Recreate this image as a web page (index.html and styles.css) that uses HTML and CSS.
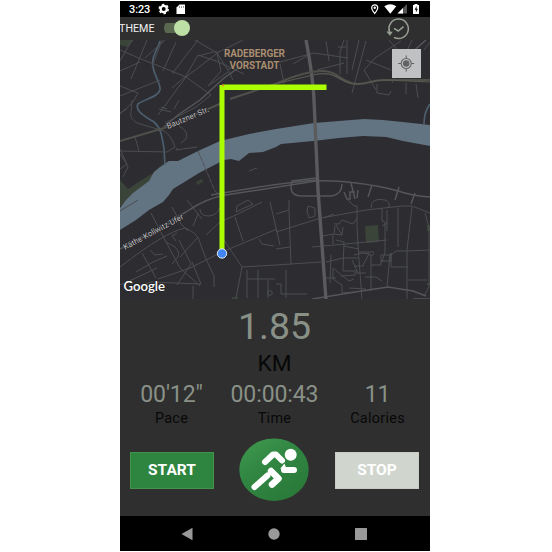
FILE: index.html
```
<!DOCTYPE html>
<html lang="en">
<head>
<meta charset="utf-8">
<title>Run tracker</title>
<link rel="stylesheet" href="styles.css">
</head>
<body>
<main class="phone">
  <header class="status">
    <span class="clock">3:23</span>
    <svg class="status-left" viewBox="158 0 30 17" width="30" height="17">
      <circle cx="163.700" cy="9" r="3.100" fill="none" stroke="#fff" stroke-width="2.200"/>
      <circle cx="163.700" cy="9" r="4.500" fill="none" stroke="#fff" stroke-width="1.500" stroke-dasharray="2.356 2.356"/>
      <path fill="#fff" d="M179.500 4.500h5.500v9.500h-8.500v-6.500z"/>
      <path stroke="#777" d="M179.500 6v2M181.500 6v2M183.500 6v2" stroke-width=".7"/>
    </svg>
    <svg class="status-right" viewBox="368 0 54 17" width="54" height="17">
      <path d="M374.700 13.500c-2-2.500-3-4.200-3-5.700a3 3 0 0 1 6 0c0 1.500-1 3.200-3 5.700z" fill="none" stroke="#fff" stroke-width="1.200"/>
      <circle cx="374.700" cy="7.800" r="1.200" fill="#fff"/>
      <path d="M384.300 6.300q6-4 12 0l-6 7.400z" fill="#fff"/>
      <path d="M407 4v9.500h-9.500z" fill="#555"/><path d="M403 8v5.500h-5.500z" fill="#fff"/>
      <path d="M413 5h1.500V4h3v1h1.500v9h-6z" fill="#fff"/>
      <path d="M416.600 6l-2 3.800h1.300V12.500l2-3.800h-1.300z" fill="#111"/>
    </svg>
  </header>
  <div class="toolbar">
    <span class="theme">THEME</span>
    <span class="switch"><span class="knob"></span></span>
    <svg class="history" viewBox="385 17 26 23" width="26" height="23" fill="none" stroke="#98a094" stroke-width="1.500">
      <path d="M389.500 32a9.700 9.700 0 1 1 4.500 5.300M389.500 32l-.3-3"/>
      <path d="M394 28.300l4.200 2.700 5.300-4.300" stroke-width="1.600"/>
      <path d="M386.300 31.500l6.400.3-2.700 4z" fill="#98a094" stroke="none"/>
    </svg>
  </div>
  <section class="map">
    <svg class="map-art" viewBox="120 40 310 260" width="310" height="260" fill="none">
      <g class="park">
        <path d="M120 40h14l-7 7-7-2z"/>
        <path d="M163 153l-2 13-8 9-4 7-17 13-12 12v-27l8 9 12-8 13-8 9-9z"/>
        <path d="M196 182l6-3 1 3-6 3zM365 226l13-1 1 17-13 1zM427 225h3v6h-3zM427 283h3v2h-3zM232 297h6v2h-6z"/>
      </g>
      <path class="water" d="M120 208L126 200 133 193 149 181 154 172 164 164 169 161 178 161 198 151 220 141 249 134 276 129 314 123 339 121 364 119 383 120 403 122 430 125V146L403 141 386 137 363 136 339 138 313 141 281 144 276 147 263 152 249 153 239 161 231 159 224 160 199 173 173 189 169 195 163 202 149 210 136 220 120 230z"/>
      <path class="stream" d="M160 41C157 51 151 57 153 67C155 78 161 84 160 90C158 97 145 99 138 104C134 111 146 117 154 122C161 128 162 136 164 149L165 165M430 104q-6 8-6 20"/>
      <g class="roads">
        <path d="M120 61l12-21M131 79l16-39M140 62l-20 9M120 50l26 11 13 5 27 11M152 67l10-27M163 71l13-29M172 74l26-34M120 96l40-16M145 58l20-18M172 88l14-12 12-21 18 6M186 77l25 18-15 12-31 16M186 77l-28 38M195 40l22 13 26-13M217 53l11 17 5 10M120 86l18 7-5 9-13 12M217 53l4 18-13 15M214 60l30 14M217 51l-19 5M186 77l34-26M228 70l30-20M208 86l20-14"/>
        <path d="M132 100l-1 12q-2 6 6 11l27 8q7 4 11 16l-8 5-47-1M135 137l4 14M120 154l7 10-7 5M120 149l8 18-5 10M127 109l-7 4M159 109l12 3M161 107l6 2M174 109l5-9M179 126q10 5 7 13l-5 4M177 148l-1 2 21-3M215 191l9 7M249 171l8-3"/>
        <path d="M120 211l18-11M151 213l15 29 14 26 20 18M172 207l9 17 7 7M187 200l15 19M120 267q45-35 65-39 12 5 14 12l7 19 8 17v11M142 253l14 25M158 279l32-11 26-13 6-3 55-23M136 272l17-10 14-6M138 277l19-9M177 285l14-21-12-24M166 242l9 5q5 5 3 10l-6 7M150 250l5 5 8-1M180 257l18-20M177 233l-5 3 4 5M133 291l17-9 51 2-9-22M120 285l18-8M193 286v13M200 209q0 7 9 7 9-1 11-9M198 214l-5 12M206 235l14-13 18-8 24-12M220 234l22 33-6 31M235 217l8 24M242 267l34-2M247 270v28M258 270v28M247 279h28M268 280v18M270 202l10 43M259 239l3 5 12 2M236 212l17-8-5-4-11 6z"/>
        <path d="M276 214l13-4v-10M289 210l2 55M276 249l14-2M276 265l45-3M276 232l45-14 45-8 36-4 10 0 18 7M276 284h5v10h26M286 270v28M308 206l7 2v8l-6 2-2-7zM323 218l11-4M348 200l6 6h3v20l1 20 4 54M371 208q0-11 14-8 5 1 4 8M382 208v13l3 1v30l-3 10M398 208v39M412 207l-5 43v49M425 213l4 14v60l-5 9M312 247l44-4 31-3M323 236l10-2v10M334 224h5l3-4 11 4 4-6M336 225l6 10M335 226l-1 8 8 1 1-8M326 262l17-4h15M331 255l-1 28M326 278h10M336 240l8 2-1 29h14M344 246l15 3M352 260l6 13M333 268l16 13 5-2M333 268v11l9 6v8l12-1M341 276l15-1M363 265l6-11-7-1-8 2M371 255v36M371 265h10v-10h10l5-4 11 0 23-1M391 253v14h17M390 254l-3 33M365 277h11l6 4M408 280h19M359 252h10M349 288l17 1M381 261h10v-8M382 226l5-3M387 210v21M354 266h10M354 273h12"/>
        <circle cx="371.500" cy="253.500" r="2"/>
        <circle cx="270" cy="293" r="2.300"/>
      </g>
      <g class="roads">
        <path d="M280 64l4 20M317 70l27-7M329 61l-3-20M344 40l-4 12v22M276 63l38-10 34 5M347 74V40M338 47h8M359 40l-7 30M366 41l-14 52M376 90l-12-20 11-12 26-17M377 84v9l12 2 2-4M412 40l-20 43M401 54l-12-14M366 60l25 10M310 54l-17 10M406 83v11M416 84l2 14M424 50l6-8"/>
      </g>
      <path class="walk" d="M198 151l17 40"/>
      <path class="roads roads-mid" d="M211 195q67-12 105-15"/>
      <path class="roads roads-mid" d="M164 127l14-12 22-15 24-22 20-14"/>
      <path class="roads roads-mid" d="M120 249q40-22 66-37 20-14 40-17t90-14q15-1 40 2t42 8q15 5 32 6"/>
      <g class="roads roads-mid">
        <path d="M291 187q0 9 11 9h30q10-2 10-12M291 187l1-6 24-3M351 183l4 16M372 185l-4 12M399 187l-4 13M415 193l-4 11M344 192l3 7h3v-7h5M358 190l-1 8"/>
        <path d="M312 299l56-9 20-3 25 4 13 5M413 299h17M426 40l-17 15"/>
      </g>
      <path class="main-road" d="M306 40q7 37 8 60l4 90 8 110"/>
      <path class="trunk" d="M120 141l44-13 58-25"/>
      <path class="trunk" d="M230 99l48-16q27-12 45-12c16 0 19 13 34 13 12 0 15-4 27-4h46"/>
      <path class="trunk-line" d="M279 83l34-8c25-6 25 9 44 9 12 0 15-4 27-4l46 2"/>
      <g class="street-label">
        <text x="168" y="129" transform="rotate(-23 168 129)" textLength="45">Bautzner Str.</text>
        <text x="125" y="250" transform="rotate(-28 125 250)" textLength="67">Käthe-Kollwitz-Ufer</text>
      </g>
      <g class="district"><text x="254.500" y="57" textLength="61">RADEBERGER</text><text x="254.500" y="68.500" textLength="50">VORSTADT</text></g>
      <g class="route">
        <rect x="219.500" y="85" width="5" height="167"/>
        <rect x="222" y="84.500" width="104.500" height="5.500"/>
      </g>
      <circle cx="223" cy="85.500" r="1" fill="#ff7a20"/>
      <circle cx="222" cy="253.500" r="4.700" fill="#4285f4" stroke="#e5edf8" stroke-width="1"/>
      <text class="google" x="123.500" y="290.500" textLength="41.500" lengthAdjust="spacingAndGlyphs">Google</text>
      <rect x="392" y="49" width="29" height="29" fill="#c0c1c3"/>
      <g stroke="#626365" stroke-width="1.100"><circle cx="406.200" cy="63.500" r="5"/><circle cx="406.200" cy="63.500" r="2.700" fill="#626365"/><path d="M406.200 55.500v3M406.200 68.500v3M398.200 63.500h3M411.200 63.500h3"/></g>
    </svg>
  </section>
  <section class="stats">
    <div class="distance">1.85</div>
    <div class="unit">KM</div>
    <div class="metrics">
      <div class="metric"><span class="value">00'12"</span><span class="label">Pace</span></div>
      <div class="metric"><span class="value">00:00:43</span><span class="label">Time</span></div>
      <div class="metric"><span class="value">11</span><span class="label">Calories</span></div>
    </div>
    <div class="actions">
      <button class="btn start">START</button>
      <svg class="runner" viewBox="238 439 72 64" width="72" height="64">
        <defs><linearGradient id="g" x1="0" y1="0" x2=".7" y2="1"><stop offset="0" stop-color="#419a50"/><stop offset=".5" stop-color="#308541"/><stop offset="1" stop-color="#2a7a39"/></linearGradient></defs>
        <ellipse cx="274" cy="470.700" rx="34.700" ry="31.200" fill="url(#g)"/>
        <circle cx="290.700" cy="455.700" r="6" fill="#fff"/>
        <g fill="none" stroke="#fff" stroke-width="6" stroke-linecap="round" stroke-linejoin="round">
          <path d="M265 463l8-7.500h3l6 6M284 471h10"/>
          <path d="M254.500 488l13-11.500"/>
          <path d="M271 472l7.500 7.500-6.500 6" stroke-width="6.500"/>
        </g>
        <path d="M280 470l4.500-5.500 1.500 4z" fill="#fff"/>
      </svg>
      <button class="btn stop">STOP</button>
    </div>
  </section>
  <nav class="nav">
    <svg width="12" height="14" viewBox="0 0 12 14"><path d="M11.500.7v12.600L.5 7z"/></svg>
    <svg width="12" height="12" viewBox="0 0 12 12"><circle cx="6" cy="6" r="5.700"/></svg>
    <svg width="12" height="12" viewBox="0 0 12 12"><rect width="12" height="12" rx=".5"/></svg>
  </nav>
</main>
</body>
</html>
```
FILE: styles.css
```
* { box-sizing: border-box; }
body { margin: 0; background: #fff; font-family: Roboto, "Liberation Sans", sans-serif; }
.phone { width: 310px; height: 550px; margin: 1px 0 0 120px; display: flex; flex-direction: column; background: #2f2f2f; overflow: hidden; }
.status { height: 16px; flex: none; display: flex; align-items: center; background: #000; color: #fff; padding: 0 8px 0 9px; }
.clock { width: 29px; font-size: 11px; font-weight: 500; letter-spacing: -.1px; }
.status-left { margin-top: -1px; }
.status-right { margin: -1px 0 0 auto; }
.toolbar { height: 23px; flex: none; display: flex; align-items: center; padding-right: 19px; color: #f0f0f0; }
.theme { width: 45px; margin-left: -1px; font-size: 10.7px; line-height: 23px; white-space: nowrap; }
.switch { width: 26px; height: 16px; display: flex; align-items: center; justify-content: flex-end; margin-top: -1px; background: linear-gradient(#59684f, #59684f) left center / 22px 10px no-repeat; border-radius: 8px 0 0 8px; }
.knob { width: 16px; height: 16px; border-radius: 50%; background: #bce0a6; }
.history { margin-left: auto; }
.map { height: 259px; flex: none; overflow: hidden; background: #2c2c31; }
.map-art { display: block; }
.park { fill: #3b4439; }
.water { fill: #627382; }
.stream { stroke: #4c5e6d; stroke-width: 1.7; }
.roads { stroke: #4c4e51; stroke-width: 1; }
.roads-mid { stroke: #555658; stroke-width: 1.5; }
.walk { stroke: #505257; stroke-width: 1; stroke-dasharray: 5 1; }
.main-road { stroke: #5b5b5d; stroke-width: 3.4; }
.trunk { stroke: #50504b; stroke-width: 2; }
.trunk-line { stroke: #5b5a50; stroke-width: 1.2; }
.street-label { font-size: 8px; fill: #bbb; stroke: #29292e; stroke-width: 1.5px; paint-order: stroke; }
.district { font-size: 10px; font-weight: 700; fill: #a98d70; text-anchor: middle; stroke: #29292e; stroke-width: 1px; paint-order: stroke; }
.route { fill: #acff00; }
.google { font: 600 13.5px Lato, sans-serif; fill: #fff; stroke: #222; stroke-width: 1px; paint-order: stroke; }
.stats { flex: 1; display: flex; flex-direction: column; align-items: center; padding-right: 1px; }
.distance { margin-top: 5px; font-size: 37.4px; line-height: 44px; color: #899187; }
.unit { margin-top: 3px; font-size: 22.7px; line-height: 26px; color: #080808; }
.metrics { width: 100%; display: grid; grid-template-columns: repeat(3, 1fr); padding: 4px 0 0 0; }
.metric { display: flex; flex-direction: column; align-items: center; }
.value { font-size: 23px; line-height: 27px; letter-spacing: -.1px; color: #899187; }
.label { font-size: 14.4px; line-height: 20px; letter-spacing: .3px; position: relative; top: 1px; color: #080808; }
.actions { width: 100%; flex: none; display: flex; justify-content: space-between; align-items: center; height: 64px; margin-top: 10px; padding: 0 10px 0 10px; }
.runner { margin-right: 1px; }
.btn { width: 84px; height: 37px; padding: 0; border: 1px solid #43934b; font: 700 15.5px Roboto, sans-serif; color: #fff; background: #2d8540; }
.stop { border-color: #c7ccc4; background: #d0d6ce; }
.nav { height: 35px; flex: none; display: flex; align-items: center; justify-content: center; gap: 75px; background: #000; padding-right: 3px; }
.nav svg { fill: #999; }
```
